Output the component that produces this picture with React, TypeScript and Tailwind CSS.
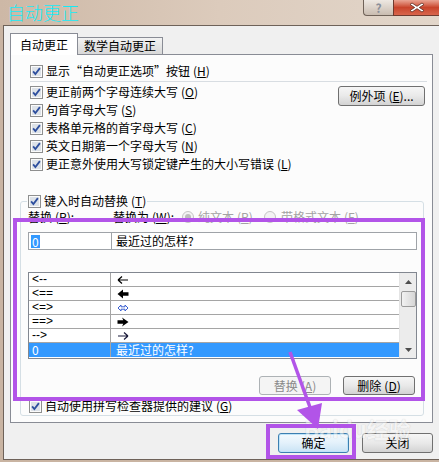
import React from "react";

const btn =
  "flex items-center justify-center rounded-[3px] border border-[#707070] bg-gradient-to-b from-[#f6f6f6] via-[#e9e9e9] to-[#d3d3d3] text-[12px] leading-none";

function CheckBox() {
  return (
    <svg width="13" height="13" viewBox="0 0 13 13" className="shrink-0">
      <rect x="0.5" y="0.5" width="12" height="12" fill="#fbfbfb" stroke="#8e8f8f" />
      <rect x="2" y="2" width="9" height="9" fill="#dde2e8" />
      <path d="M3.1 6.3 L5.4 9 L9.9 3.1" fill="none" stroke="#2e4f9e" strokeWidth="1.8" />
    </svg>
  );
}

function Radio({ dot }: { dot?: boolean }) {
  return (
    <svg width="12" height="12" viewBox="0 0 12 12" className="shrink-0">
      <circle cx="6" cy="6" r="5.5" fill="#f3f3f3" stroke="#c4c4c4" />
      {dot && <circle cx="6" cy="6" r="3" fill="#bdbdbd" />}
    </svg>
  );
}

function Key({ k }: { k: string }) {
  return (
    <span className="ml-[3px]">
      (<span className="underline">{k}</span>)
    </span>
  );
}

function CheckRow({ label, k, h = "h-[18px]" }: { label: string; k: string; h?: string }) {
  return (
    <div className={`flex items-center gap-[3px] ${h}`}>
      <CheckBox />
      <span className="whitespace-nowrap">
        {label}
        <Key k={k} />
      </span>
    </div>
  );
}

const arrows = [
  <path key="a" d="M1 5 H11 M1 5 L5 1.5 M1 5 L5 8.5" stroke="#000" strokeWidth="1.2" fill="none" />,
  <path key="b" d="M0.5 5 L6 0.5 L6 3.3 L11.5 3.3 L11.5 6.7 L6 6.7 L6 9.5 Z" fill="#000" />,
  <path key="c" d="M1 5 L4 2 V3.8 H8 V2 L11 5 L8 8 V6.2 H4 V8 Z" fill="#fff" stroke="#3a5fd0" strokeWidth="1" />,
  <path key="d" d="M11.5 5 L5 0.5 L6.3 3.3 L0.5 3.3 L0.5 6.7 L6.3 6.7 L5 9.5 Z" fill="#000" />,
  <path key="e" d="M1 5 H11 M11 5 L7 1.5 M11 5 L7 8.5" stroke="#1a1a3a" strokeWidth="1.2" fill="none" />,
];

const listRows = [
  { a: "<--", i: 0 },
  { a: "<==", i: 1 },
  { a: "<=>", i: 2 },
  { a: "==>", i: 3 },
  { a: "-->", i: 4 },
];

export default function App() {
  return (
    <div className="relative w-[439px] h-[462px] overflow-hidden bg-[#c9b4a2] font-['Noto_Sans_CJK_SC','Liberation_Sans',sans-serif] text-[12px] text-black">
      {/* title bar */}
      <div className="h-[25px] flex items-center justify-between bg-gradient-to-r from-[#cdb8a6] via-[#dccbbc] to-[#e2d6ca]">
        <span className="ml-[7px] mb-[2px] text-[18px] leading-[20px] font-light text-[#14eaf6]">自动更正</span>
        <div className="flex self-start">
          <div className="w-[30px] h-[16px] flex items-center justify-center rounded-bl-[4px] border border-t-0 border-r-0 border-[#6f6258] bg-gradient-to-b from-[#eee8e2] to-[#c9bcb0]">
            <span className="text-[12px] leading-[14px] font-bold text-[#8a8f9a]">?</span>
          </div>
          <div className="w-[46px] h-[16px] flex items-center justify-center border-l border-b border-[#6f3a2e] bg-gradient-to-b from-[#e9a594] via-[#c8442b] to-[#d8654c]">
            <svg width="16" height="11" viewBox="0 0 16 11">
              <path d="M3 1 L8 4.3 L13 1 L15 2.5 L10.3 5.5 L15 8.5 L13 10 L8 6.7 L3 10 L1 8.5 L5.7 5.5 L1 2.5 Z" fill="#fff" stroke="#5a2a20" strokeWidth="0.8" />
            </svg>
          </div>
        </div>
      </div>

      <div className="flex h-[435px]">
        <div className="w-[3px] shrink-0" />
        <div className="flex-1 flex flex-col bg-[#f0f0f0] border-l border-t border-b border-[#6e6259]">
          {/* tabs */}
          <div className="relative z-10 flex items-end ml-[6px] mt-[7px] h-[21px]">
            <div className="w-[68px] h-[22px] -mb-px flex items-center justify-center border border-b-0 border-[#898c95] bg-white">
              自动更正
            </div>
            <div className="w-[85px] h-[17px] flex items-center justify-center border border-l-0 border-b-0 border-[#898c95] bg-gradient-to-b from-[#f3f3f3] to-[#d8d8d8]">
              数学自动更正
            </div>
          </div>

          {/* panel */}
          <div className="ml-[6px] w-[423px] h-[369px] border border-[#898c95] bg-[#fcfcfc] flex flex-col">
            <div className="pl-[19px] pr-[7px]">
              <div className="mt-[8px]">
                <CheckRow label="显示“自动更正选项”按钮" k="H" h="h-[16px]" />
              </div>
              <div className="mt-[2px] h-px bg-[#d8dde2] mr-[-2px]" />
              <div className="flex justify-between mt-[1px]">
                <div className="flex flex-col">
                  <CheckRow label="更正前两个字母连续大写" k="O" />
                  <CheckRow label="句首字母大写" k="S" />
                  <CheckRow label="表格单元格的首字母大写" k="C" />
                  <CheckRow label="英文日期第一个字母大写" k="N" />
                  <CheckRow label="更正意外使用大写锁定键产生的大小写错误" k="L" />
                </div>
                <div className={`${btn} mt-[3px] w-[87px] h-[20px]`}>
                  例外项<Key k="E" />...
                </div>
              </div>
            </div>

            {/* group box */}
            <fieldset className="ml-[9px] mt-[20px] w-[404px] border border-[#d5dfe5] rounded-[3px] pl-[7px] pr-[6px]">
              <legend className="ml-[-1px] px-[1px] h-[16px]">
                <CheckRow label="键入时自动替换" k="T" h="h-[16px]" />
              </legend>
              <div className="flex items-center h-[16px]">
                <span className="w-[85px]">
                  替换<Key k="R" />:
                </span>
                <span className="w-[69px]">
                  替换为<Key k="W" />:
                </span>
                <span className="flex items-center gap-[4px] w-[82px] text-[#a3a3a3]">
                  <Radio dot />
                  <span>
                    纯文本<Key k="P" />
                  </span>
                </span>
                <span className="flex items-center gap-[5px] text-[#a3a3a3]">
                  <Radio />
                  <span>
                    带格式文本<Key k="F" />
                  </span>
                </span>
              </div>
              <div className="mt-[7px] flex h-[18px]">
                <div className="w-[84px] border border-[#9fa3a8] bg-white flex items-center pl-[2px]">
                  <span className="bg-[#3399ff] text-white leading-[13px] px-[1px]">0</span>
                </div>
                <div className="flex-1 border border-l-0 border-[#9fa3a8] bg-white flex items-center pl-[4px]">
                  最近过的怎样?
                </div>
              </div>
              <div className="mt-[22px] h-[87px] border border-[#828790] bg-white flex">
                <div className="flex-1 flex flex-col">
                  {listRows.map((r) => (
                    <div key={r.a} className="h-[14px] flex border-b border-[#a5a5a5]">
                      <div className="w-[82px] border-r border-[#a5a5a5] pl-[3px] leading-[13px] font-['Liberation_Sans',sans-serif]">
                        {r.a}
                      </div>
                      <div className="flex-1 pl-[6px] flex items-center">
                        <svg width="12" height="10" viewBox="0 0 12 10">
                          {arrows[r.i]}
                        </svg>
                      </div>
                    </div>
                  ))}
                  <div className="h-[14px] flex bg-[#3399ff] text-white">
                    <div className="w-[82px] border-r border-[#a5a5a5] pl-[3px] leading-[14px]">0</div>
                    <div className="flex-1 pl-[5px] leading-[14px]">最近过的怎样?</div>
                  </div>
                </div>
                <div className="w-[17px] bg-[#ececec] flex flex-col items-center border-l border-[#e4e4e4]">
                  <div className="h-[17px] flex items-center justify-center">
                    <svg width="7" height="4" viewBox="0 0 7 4">
                      <path d="M0 4 L3.5 0 L7 4 Z" fill="#4d4d4d" />
                    </svg>
                  </div>
                  <div className="mt-[1px] w-[15px] h-[16px] rounded-[2px] border border-[#9b9b9b] bg-gradient-to-r from-[#f2f2f2] to-[#d6d6d6]" />
                  <div className="flex-1" />
                  <div className="h-[17px] flex items-center justify-center">
                    <svg width="7" height="4" viewBox="0 0 7 4">
                      <path d="M0 0 L3.5 4 L7 0 Z" fill="#4d4d4d" />
                    </svg>
                  </div>
                </div>
              </div>
              <div className="mt-[17px] flex justify-end gap-[12px] pr-[2px]">
                <div className="w-[72px] h-[19px] flex items-center justify-center rounded-[3px] border border-[#adb2b5] bg-[#f4f4f4] text-[#8a8a8a]">
                  替换<Key k="A" />
                </div>
                <div className={`${btn} w-[72px] h-[19px]`}>
                  删除<Key k="D" />
                </div>
              </div>
              <div className="mt-[3px] mb-[1px] pl-[1px]">
                <CheckRow label="自动使用拼写检查器提供的建议" k="G" h="h-[16px]" />
              </div>
            </fieldset>
          </div>

          {/* footer */}
          <div className="mt-[10px] flex justify-end gap-[13px] pr-[6px]">
            <div className="w-[71px] h-[20px] flex items-center justify-center rounded-[3px] border border-[#3c7fb1] bg-gradient-to-b from-[#f4fafe] via-[#e3f1fb] to-[#c9e3f5] shadow-[inset_0_0_0_1px_#bfe4f9]">
              确定
            </div>
            <div className={`${btn} w-[71px] h-[20px]`}>关闭</div>
          </div>
        </div>
      </div>

      {/* watermark */}
      <div className="pointer-events-none absolute left-[304px] top-[416px] opacity-50">
        <span className="text-[22px] leading-[24px] font-bold text-[#f8f8f8] [text-shadow:0_0_1px_#a0a0a0]">Baidu经验</span>
      </div>

      {/* highlight overlays */}
      <div className="pointer-events-none absolute left-[13px] top-[218px] w-[412px] h-[183px] border-[4px] border-[#b254e8]" />
      <div className="pointer-events-none absolute left-[266px] top-[424px] w-[90px] h-[35px] border-[4px] border-[#b254e8]" />
      <svg className="pointer-events-none absolute left-0 top-0" width="439" height="462" viewBox="0 0 439 462">
        <path d="M290 352 L311 410" stroke="#b254e8" strokeWidth="3.5" />
        <path d="M297 410 L322 403 L318 429 Z" fill="#b254e8" />
      </svg>
    </div>
  );
}
